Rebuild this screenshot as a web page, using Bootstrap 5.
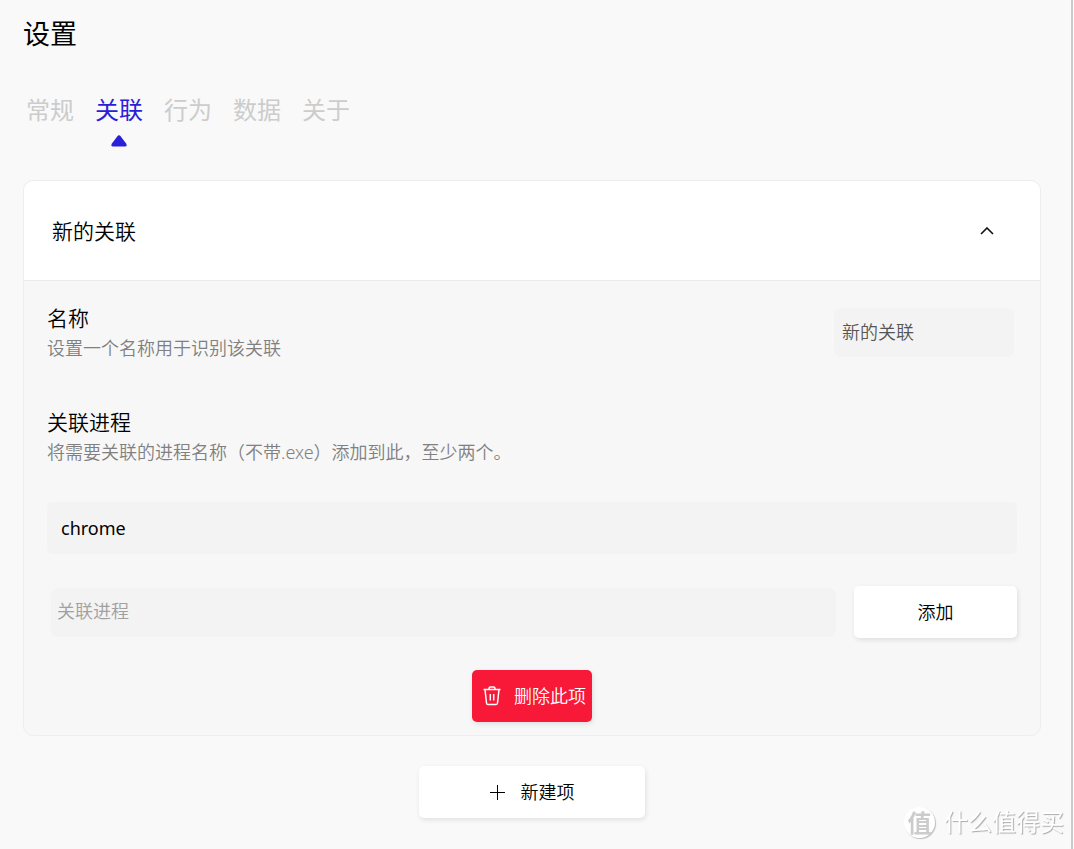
<!DOCTYPE html>
<html lang="zh-CN">
<head>
<meta charset="utf-8">
<meta name="viewport" content="width=device-width, initial-scale=1">
<title>设置</title>
<link href="https://cdn.jsdelivr.net/npm/bootstrap@5.3.0/dist/css/bootstrap.min.css" rel="stylesheet">
<style>
  body { font-family: "Noto Sans", "Noto Sans CJK SC", sans-serif; font-size: 18px; line-height: 28px; font-weight: 350; color: #000; background: #f9f9f9; }
  .window { border-right: 2px solid #ccc; margin-right: 1px; padding: 16px 30px 28px 23px; }
  .page-title { font-size: 27px; line-height: 36px; font-weight: 400; }
  .tabs { gap: 21px; margin: 41px 3px 33px; }
  .tabs .nav-link { padding: 0; font-size: 24px; line-height: 34px; font-weight: 400; color: #ccc; }
  .tabs .nav-link.active { color: #2b20d9; }
  .tabs .marker { display: block; margin: 8px auto 0; }
  .assoc { border: 1px solid #eee; border-radius: 10px; background: #f7f7f7; overflow: hidden; --bs-card-inner-border-radius: 9px; }
  .assoc .card-header { background: #fff; border-bottom: 1px solid #ebebeb; padding: 0; }
  .toggle { border: 0; background: none; color: #000; font-size: 21px; line-height: 32px; font-weight: 350; padding: 34px 46px 33px 28px; }
  .assoc .card-body { padding: 21px 23px 13px; color: #000; }
  .item-title { font-size: 21px; line-height: 32px; font-weight: 350; margin: 0; }
  .item-note { color: #808080; margin: 0; }
  .name-row { margin-bottom: 44px; }
  .field { background: #f3f3f3; border: 0; border-radius: 7px; font-size: 18px; line-height: 28px; font-weight: 350; padding: 9px 8px 12px; height: 49px; color: #555; }
  .field:focus { background: #f3f3f3; }
  .field::placeholder { color: #a0a0a0; opacity: 1; }
  .name-field { width: 180px; margin: 6px 3px 0 0; }
  .process-list { margin-top: 36px; }
  .process-list .list-group-item { background: #f3f3f3; border: 0; border-radius: 5px; padding: 12px 14px; color: #000; font-weight: 400; }
  .add-row { margin: 32px 0 32px 4px; gap: 18px; }
  .add-row .field { padding-left: 6px; }
  .action { border: 0; border-radius: 5px; background: #fff; color: #000; font-size: 18px; line-height: 28px; font-weight: 350; padding: 12px 6px; box-shadow: 1px 2px 5px rgba(0,0,0,.1); }
  .action:hover { background: #fff; color: #000; }
  .add-action { width: 163px; }
  .create-action { width: 226px; margin-top: 30px; }
  .delete-action, .delete-action:hover { background: #f71937; color: #fff; }
  .watermark { right: 10px; bottom: 10px; gap: 9px; font-size: 24px; line-height: 34px; font-weight: 400; color: #fff; text-shadow: 1px 1px 1px #aaa; }
  .watermark .seal { width: 31px; height: 31px; line-height: 29px; font-family: "Noto Sans CJK SC", sans-serif; font-weight: 700; color: #ccc; background: #fff; text-shadow: none; box-shadow: 1px 1px 1px #bbb; }
</style>
</head>
<body>
<main class="window min-vh-100">
  <h1 class="page-title m-0">设置</h1>
  <nav class="nav tabs align-items-start">
    <a class="nav-link" href="#general">常规</a>
    <a class="nav-link active" href="#assoc" aria-current="page">关联
      <svg class="marker" width="16" height="12" viewBox="0 0 16 12" aria-hidden="true"><path d="M6.2 1.4Q8-.8 9.8 1.4L15.3 8.8Q16.200 11.500 14 11.500H2Q-.2 11.500.7 8.800Z" fill="#2b20d9"/></svg>
    </a>
    <a class="nav-link" href="#behavior">行为</a>
    <a class="nav-link" href="#data">数据</a>
    <a class="nav-link" href="#about">关于</a>
  </nav>

  <section class="card assoc">
    <div class="card-header">
      <button class="toggle w-100 d-flex align-items-center justify-content-between text-start" type="button" data-bs-toggle="collapse" data-bs-target="#assoc" aria-expanded="true" aria-controls="assoc">
        新的关联
        <svg width="14" height="8" viewBox="0 0 14 8" fill="none" stroke="#111" stroke-width="1.600" aria-hidden="true"><path d="M1 7l6-6 6 6"/></svg>
      </button>
    </div>
    <div class="collapse show" id="assoc">
      <div class="card-body">
        <div class="d-flex justify-content-between align-items-start name-row">
          <div>
            <h2 class="item-title"><label for="assoc-name">名称</label></h2>
            <p class="item-note">设置一个名称用于识别该关联</p>
          </div>
          <input class="form-control field name-field" id="assoc-name" type="text" value="新的关联">
        </div>
        <h2 class="item-title"><label for="process">关联进程</label></h2>
        <p class="item-note">将需要关联的进程名称（不带.exe）添加到此，至少两个。</p>
        <ul class="list-group process-list">
          <li class="list-group-item">chrome</li>
        </ul>
        <div class="d-flex add-row align-items-center">
          <input class="form-control field" id="process" type="text" placeholder="关联进程">
          <button class="btn action add-action flex-shrink-0" type="button">添加</button>
        </div>
        <div class="text-center">
          <button class="btn action delete-action d-inline-flex align-items-center" type="button">
            <svg class="ms-1 me-2 pe-1" width="24" height="20" viewBox="0 0 20 20" fill="none" stroke="#fff" stroke-width="1.500" aria-hidden="true"><path d="M1.500 3.500h17M7 3.500V2.500q0-1.500 1.500-1.500h3q1.500 0 1.500 1.500v1M3 3.500l1.500 13.500q.2 1.500 1.500 1.500h8q1.300 0 1.500-1.500L17 3.500M8.300 8v6.500M11.700 8v6.500"/></svg>
            删除此项
          </button>
        </div>
      </div>
    </div>
  </section>

  <div class="text-center">
    <button class="btn action create-action d-inline-flex align-items-center justify-content-center" type="button">
      <svg class="me-3" width="15" height="15" viewBox="0 0 15 15" stroke="#000" aria-hidden="true"><path d="M7.500 0v15M0 7.500h15"/></svg>
      新建项
    </button>
  </div>
</main>
<div class="watermark position-fixed d-flex align-items-center">
  <span class="seal rounded-circle text-center">值</span>
  <span>什么值得买</span>
</div>
<script src="https://cdn.jsdelivr.net/npm/bootstrap@5.3.0/dist/js/bootstrap.bundle.min.js"></script>
</body>
</html>
